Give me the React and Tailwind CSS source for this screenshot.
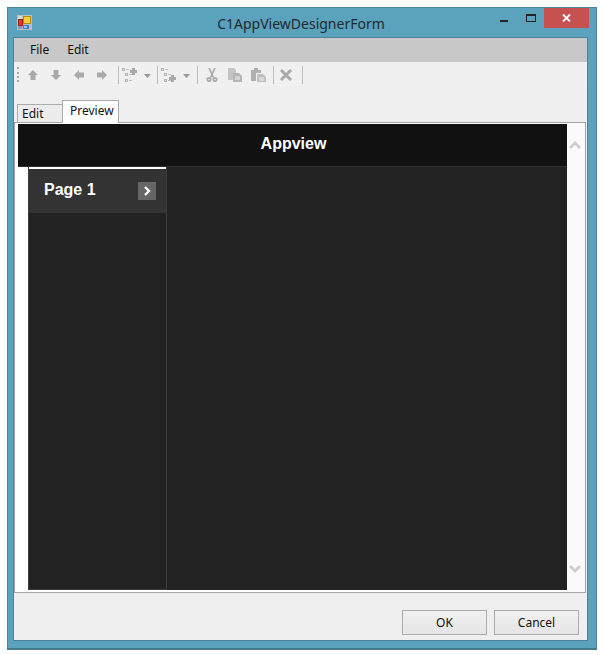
import React from "react";

const Ico = ({ children, w = 14, className = "" }) => (
  <svg width={w} height="14" viewBox={`0 0 ${w} 14`} className={className}>{children}</svg>
);
const G = "#a9a9a9";
const Sep = () => <div className="w-px h-[18px] bg-[#bdbdbd] mx-[3px]" />;
const Caret = ({ className = "" }) => <svg width="7" height="4" viewBox="0 0 7 4" className={className}><path d="M0 0h7L3.500 4z" fill="#999" /></svg>;
const Lines = () => (
  <>
    <g fill="none" stroke="#b5b5b5">
      <rect x="0.500" y="0.500" width="2" height="2" />
      <rect x="3.500" y="5.500" width="2" height="2" />
      <rect x="3.500" y="11.500" width="2" height="2" />
    </g>
    <path d="M4 1.500h3M7 6.500h3M7 12.500h3" stroke="#c0c0c0" />
  </>
);

export default function App() {
  return (
    <div className="w-[603px] h-[655px] bg-white pt-[7px] pl-[7px] font-['Liberation_Sans',sans-serif] overflow-hidden">
      <div className="w-[590px] h-[643px] bg-[#5ba2bc] border border-[#4b8399] border-b-2 border-b-[#47798c] flex flex-col">
        <div className="h-[29px] shrink-0 flex items-start relative">
          <svg width="15" height="15" viewBox="0 0 15 15" className="ml-[9px] mt-[7px]">
            <rect x="0" y="0" width="15" height="15" fill="#b9bfc4" />
            <rect x="1" y="1" width="4" height="3" fill="#d5dce0" />
            <rect x="1" y="11" width="4" height="3" fill="#8f9aa3" />
            <rect x="1" y="4" width="5" height="7" fill="#a81c14" />
            <rect x="2" y="5" width="3" height="5" fill="#e8352a" />
            <rect x="6" y="1" width="8" height="8" fill="#b98a10" />
            <rect x="7" y="2" width="6" height="6" fill="#f6cf3a" />
            <rect x="6" y="10" width="6" height="4" fill="#3c78d8" />
            <rect x="7" y="11" width="3" height="2" fill="#9cc4f5" />
          </svg>
          <div className="absolute left-0 right-0 top-[7px] text-center pr-[2px] text-[14px] leading-[17px] text-[#1e2a30] font-['Noto_Sans',sans-serif]">C1AppViewDesignerForm</div>
          <div className="ml-auto flex items-start mr-[7px]">
            <div className="w-[8px] h-[2px] bg-[#222] mt-[12px] mr-[18px]" />
            <div className="w-[10px] h-[8px] border border-[#222] border-t-2 mt-[6px] mr-[8px]" />
            <div className="w-[45px] h-[20px] bg-[#c75050] flex items-center justify-center">
              <svg width="9" height="8" viewBox="0 0 9 8"><path d="M1 0.500l7 7M8 0.500l-7 7" stroke="#fff" strokeWidth="1.800" /></svg>
            </div>
          </div>
        </div>
        <div className="ml-[5px] w-[575px] h-[604px] border border-[#4b8399] bg-[#efefef] flex flex-col">
          <div className="h-[24px] bg-[#c8c8c8] flex items-center shrink-0 pl-[16px] gap-[18px] text-[12px] text-[#111] font-['Noto_Sans',sans-serif]">
            <span>File</span>
            <span>Edit</span>
          </div>
          <div className="h-[25px] shrink-0 bg-[#f0f0f0] flex items-center pl-[3px]">
            <div className="w-[2px] h-[15px] mr-[7px] border-l-2 border-dotted border-[#aaa]" />
            <div className="flex items-center gap-[9px] mr-[6px]">
              <Ico><path d="M7 2l5 5H9.500v5h-5V7H2z" fill={G} /></Ico>
              <Ico><path d="M7 12L2 7h2.500V2h5v5H12z" fill={G} /></Ico>
              <Ico><path d="M2 7l5-5v2.500h5v5H7V12z" fill={G} /></Ico>
              <Ico><path d="M12 7L7 2v2.500H2v5h5V12z" fill={G} /></Ico>
            </div>
            <Sep />
            <Ico w={16}>
              <Lines />
              <path d="M10 0h3v2h2v3h-2v2h-3V5H8V2h2z" fill={G} />
            </Ico>
            <Caret className="ml-[6px] mt-[2px]" />
            <div className="w-[3px]" />
            <Sep />
            <Ico w={16}>
              <Lines />
              <path d="M10 7h3v2h2v3h-2v2h-3v-2H8V9h2z" fill={G} />
            </Ico>
            <Caret className="ml-[6px] mt-[2px]" />
            <div className="w-[4px]" />
            <Sep />
            <div className="flex items-center gap-[7px] ml-[3px] mr-[3px]">
              <Ico w={16}>
                <g fill="none" stroke={G} strokeWidth="1.700">
                  <path d="M5 0l4.500 9.500M11 0L6.500 9.500" />
                  <circle cx="5" cy="11.500" r="1.700" />
                  <circle cx="11" cy="11.500" r="1.700" />
                </g>
              </Ico>
              <Ico w={16}><path d="M1 0h6l2 2v3h-2v7H1z" fill="#c4c4c4" /><path d="M6 5h6l3 3v6H6z" fill="#b5b5b5" /><path d="M8 9h5M8 11h5" stroke="#eee" /></Ico>
              <Ico w={17}><path d="M1 2h3V0h4v2h3v3H6v8H1z" fill="#b0b0b0" /><path d="M7 6h6l3 3v5H7z" fill="#c0c0c0" /><path d="M9 10h5M9 12h5" stroke="#eee" /></Ico>
            </div>
            <Sep />
            <svg width="14" height="14" viewBox="0 0 14 14" className="ml-[2px] mr-[6px]"><path d="M2 2l10 10M12 2L2 12" stroke={G} strokeWidth="3" /></svg>
            <Sep />
          </div>
          <div className="h-[12px] shrink-0" />
          <div className="flex items-end h-[24px] shrink-0 pl-[3px]">
            <div className="w-[46px] h-[19px] border border-[#acacac] border-b-0 bg-[#ececec] pl-[4px] text-[12px] leading-[17px] text-[#111] font-['Noto_Sans',sans-serif]">Edit</div>
            <div className="w-[57px] h-[23px] -ml-px border border-[#acacac] border-b-0 bg-white pl-[7px] text-[12px] leading-[20px] text-[#111] font-['Noto_Sans',sans-serif] relative z-10">Preview</div>
          </div>
          <div className="h-[471px] w-[572px] shrink-0 -mt-px border border-[#a5a5a5] bg-white flex">
            <div className="w-[552px] pl-[3px] pt-[1px] pb-[2px] shrink-0 flex flex-col">
              <div className="h-[43px] w-[549px] shrink-0 bg-[#111] border-b border-[#2e2e2e] flex items-center justify-center pl-[2px] pb-[2px] text-white font-bold text-[16px]">Appview</div>
              <div className="flex-1 ml-[10px] flex bg-[#222]">
                <div className="w-[139px] h-full shrink-0 border-l border-b border-r border-[#3c3c3c] flex flex-col">
                  <div className="h-[46px] bg-[#333] border-t-2 border-white flex items-center pl-[15px] pr-[10px]">
                    <span className="text-white font-bold text-[16px] pb-[2px]">Page 1</span>
                    <div className="ml-auto w-[18px] h-[18px] bg-[#666] flex items-center justify-center">
                      <svg width="8" height="10" viewBox="0 0 8 10"><path d="M2 1l4 4-4 4" fill="none" stroke="#fff" strokeWidth="2.400" /></svg>
                    </div>
                  </div>
                </div>
              </div>
            </div>
            <div className="flex-1 bg-[#fafafa] flex flex-col items-center justify-between pt-[18px] pb-[19px] pr-[2px]">
              <svg width="12" height="9" viewBox="0 0 12 9"><path d="M1 7l5-5 5 5" fill="none" stroke="#cdcdcd" strokeWidth="2.800" /></svg>
              <svg width="12" height="9" viewBox="0 0 12 9"><path d="M1 2l5 5 5-5" fill="none" stroke="#cdcdcd" strokeWidth="2.800" /></svg>
            </div>
          </div>
          <div className="flex-1 flex items-start justify-end pt-[17px] pr-[8px] gap-[7px]">
            {["OK", "Cancel"].map((t) => (
              <div key={t} className="w-[85px] h-[25px] border border-[#acacac] bg-gradient-to-b from-[#f0f0f0] to-[#e5e5e5] flex items-center justify-center text-[12px] text-[#111] font-['Noto_Sans',sans-serif]">{t}</div>
            ))}
          </div>
        </div>
      </div>
    </div>
  );
}
